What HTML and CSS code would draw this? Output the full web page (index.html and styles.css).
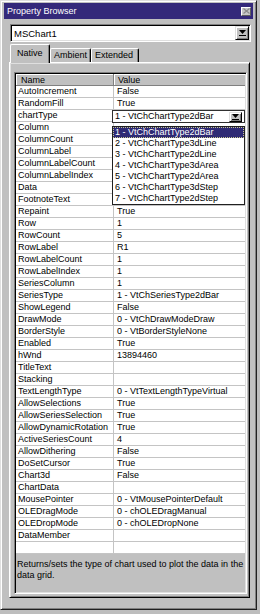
FILE: index.html
```html
<!DOCTYPE html>
<html>
<head>
<meta charset="utf-8">
<link rel="stylesheet" href="styles.css">
</head>
<body>
<div class="window">
  <div class="titlebar">
    <span class="title">Property Browser</span>
    <span class="close"><svg width="7" height="6" viewBox="0 0 7 6"><path d="M0.5 0.5L6.5 5.5M6.5 0.5L0.5 5.5" stroke="#8a8a8a" stroke-width="1.2" fill="none"/></svg></span>
  </div>
  <div class="combo">
    <span class="combo-text">MSChart1</span>
    <span class="dd-btn"><svg width="7" height="6" viewBox="0 0 7 6"><polygon points="0,0 7,0 3.5,4" fill="#000"/><rect x="0" y="5" width="7" height="1" fill="#000"/></svg></span>
  </div>
  <div class="tabs">
    <div class="tab active">Native</div>
    <div class="tab">Ambient</div>
    <div class="tab">Extended</div>
  </div>
  <div class="panel">
    <div class="grid">
      <div class="row header"><div class="name">Name</div><div class="value">Value</div></div>
      <div class="row"><div class="name">AutoIncrement</div><div class="value">False</div></div>
      <div class="row"><div class="name">RandomFill</div><div class="value">True</div></div>
      <div class="row"><div class="name">chartType</div><div class="value editing">
        <div class="editor"><span class="editor-text">1 - VtChChartType2dBar</span><span class="ed-btn"><svg width="7" height="6" viewBox="0 0 7 6"><polygon points="0,0 7,0 3.5,4" fill="#000"/><rect x="0" y="5" width="7" height="1" fill="#000"/></svg></span></div>
        <div class="list">
          <div class="item selected">1 - VtChChartType2dBar</div>
          <div class="item">2 - VtChChartType3dLine</div>
          <div class="item">3 - VtChChartType2dLine</div>
          <div class="item">4 - VtChChartType3dArea</div>
          <div class="item">5 - VtChChartType2dArea</div>
          <div class="item">6 - VtChChartType3dStep</div>
          <div class="item">7 - VtChChartType2dStep</div>
        </div>
      </div></div>
      <div class="row"><div class="name">Column</div><div class="value"></div></div>
      <div class="row"><div class="name">ColumnCount</div><div class="value"></div></div>
      <div class="row"><div class="name">ColumnLabel</div><div class="value"></div></div>
      <div class="row"><div class="name">ColumnLabelCount</div><div class="value"></div></div>
      <div class="row"><div class="name">ColumnLabelIndex</div><div class="value"></div></div>
      <div class="row"><div class="name">Data</div><div class="value"></div></div>
      <div class="row"><div class="name">FootnoteText</div><div class="value"></div></div>
      <div class="row"><div class="name">Repaint</div><div class="value">True</div></div>
      <div class="row"><div class="name">Row</div><div class="value">1</div></div>
      <div class="row"><div class="name">RowCount</div><div class="value">5</div></div>
      <div class="row"><div class="name">RowLabel</div><div class="value">R1</div></div>
      <div class="row"><div class="name">RowLabelCount</div><div class="value">1</div></div>
      <div class="row"><div class="name">RowLabelIndex</div><div class="value">1</div></div>
      <div class="row"><div class="name">SeriesColumn</div><div class="value">1</div></div>
      <div class="row"><div class="name">SeriesType</div><div class="value">1 - VtChSeriesType2dBar</div></div>
      <div class="row"><div class="name">ShowLegend</div><div class="value">False</div></div>
      <div class="row"><div class="name">DrawMode</div><div class="value">0 - VtChDrawModeDraw</div></div>
      <div class="row"><div class="name">BorderStyle</div><div class="value">0 - VtBorderStyleNone</div></div>
      <div class="row"><div class="name">Enabled</div><div class="value">True</div></div>
      <div class="row"><div class="name">hWnd</div><div class="value">13894460</div></div>
      <div class="row"><div class="name">TitleText</div><div class="value"></div></div>
      <div class="row"><div class="name">Stacking</div><div class="value"></div></div>
      <div class="row"><div class="name">TextLengthType</div><div class="value">0 - VtTextLengthTypeVirtual</div></div>
      <div class="row"><div class="name">AllowSelections</div><div class="value">True</div></div>
      <div class="row"><div class="name">AllowSeriesSelection</div><div class="value">True</div></div>
      <div class="row"><div class="name">AllowDynamicRotation</div><div class="value">True</div></div>
      <div class="row"><div class="name">ActiveSeriesCount</div><div class="value">4</div></div>
      <div class="row"><div class="name">AllowDithering</div><div class="value">False</div></div>
      <div class="row"><div class="name">DoSetCursor</div><div class="value">True</div></div>
      <div class="row"><div class="name">Chart3d</div><div class="value">False</div></div>
      <div class="row"><div class="name">ChartData</div><div class="value"></div></div>
      <div class="row"><div class="name">MousePointer</div><div class="value">0 - VtMousePointerDefault</div></div>
      <div class="row"><div class="name">OLEDragMode</div><div class="value">0 - chOLEDragManual</div></div>
      <div class="row"><div class="name">OLEDropMode</div><div class="value">0 - chOLEDropNone</div></div>
      <div class="row"><div class="name">DataMember</div><div class="value"></div></div>
      <div class="row"><div class="name"></div><div class="value"></div></div>
      <div class="desc">Returns/sets the type of chart used to plot the data in the<br>data grid.</div>
    </div>
  </div>
</div>
</body>
</html>
```
FILE: styles.css
```css
html, body {
  margin: 0;
  padding: 0;
}
body {
  background: #bdbdbd;
  font-family: "Liberation Sans", Arial, sans-serif;
  font-size: 9px;
  color: #000;
  width: 260px;
  height: 614px;
  overflow: hidden;
}
.window {
  box-sizing: border-box;
  width: 257px;
  height: 610px;
  background: #c0c0c0;
  border-top: 1px solid #dfdfdf;
  border-left: 1px solid #dfdfdf;
  border-right: 1px solid #202020;
  border-bottom: 1px solid #202020;
  box-shadow: inset 1px 1px #fff, inset -1px -1px #808080;
  padding: 2px 3px 0 3px;
}
.titlebar {
  height: 16px;
  background: #34297a;
  color: #fff;
  display: flex;
  align-items: center;
  justify-content: space-between;
  padding: 0 2px 0 3px;
}
.title {
  line-height: 16px;
  white-space: nowrap;
}
.close {
  box-sizing: border-box;
  width: 10px;
  height: 9px;
  background: #c8c8c8;
  border: 1px solid;
  border-color: #fff #606060 #606060 #fff;
  display: flex;
  align-items: center;
  justify-content: center;
}
.combo {
  box-sizing: border-box;
  margin: 5px 0 0 6px;
  width: 241px;
  height: 18px;
  background: #fff;
  border: 1px solid;
  border-color: #808080 #fff #fff #808080;
  box-shadow: inset 1px 1px #000, inset -1px -1px #dfdfdf;
  display: flex;
  align-items: center;
  justify-content: space-between;
  padding: 1px;
}
.combo-text {
  padding-left: 2px;
  font-size: 9.5px;
}
.dd-btn, .ed-btn {
  box-sizing: border-box;
  background: #c0c0c0;
  border: 1px solid;
  border-color: #dfdfdf #000 #000 #dfdfdf;
  box-shadow: inset 1px 1px #fff, inset -1px -1px #808080;
  display: flex;
  align-items: center;
  justify-content: center;
}
.dd-btn {
  width: 14px;
  height: 14px;
}
.tabs {
  display: flex;
  align-items: flex-end;
  height: 18px;
  margin: 2px 0 0 6px;
  position: relative;
  z-index: 2;
}
.tab {
  box-sizing: border-box;
  height: 14px;
  padding: 0 4px 0 3px;
  border-top: 1px solid #fff;
  border-left: 1px solid #fff;
  border-right: 1px solid #000;
  border-radius: 2px 2px 0 0;
  box-shadow: inset -1px 0 #808080;
  line-height: 13px;
  background: #c0c0c0;
}
.tab.active {
  height: 19px;
  margin-bottom: -1px;
  padding: 0 5px 0 6px;
  line-height: 17px;
}
.tab:nth-child(2) { width: 41px; }
.tab:nth-child(3) { width: 48px; }
.tab.active { width: 40px; }
.panel {
  box-sizing: border-box;
  margin-left: 5px;
  width: 241px;
  height: 536px;
  border: 1px solid;
  border-color: #fff #000 #000 #fff;
  box-shadow: inset 1px 1px #dfdfdf, inset -1px -1px #808080;
  padding: 9px 0 0 4px;
}
.grid {
  box-sizing: border-box;
  width: 233px;
  height: 522px;
  border: 1px solid;
  border-color: #808080 #fff #fff #808080;
  box-shadow: inset 1px 1px #000, inset -1px -1px #dfdfdf;
  padding: 1px;
  display: flex;
  flex-direction: column;
}
.row {
  display: flex;
  height: 12px;
  flex: none;
  background: #fff;
}
.row .name, .row .value {
  box-sizing: border-box;
  border-bottom: 1px solid #c4c4c4;
  line-height: 11px;
  white-space: nowrap;
}
.row .name {
  width: 98px;
  padding-left: 2px;
  border-right: 1px solid #c4c4c4;
}
.row .value {
  flex: 1;
  padding-left: 3px;
}
.row.header {
  height: 12px;
  background: #c0c0c0;
}
.row.header .name, .row.header .value {
  border-bottom: 1px solid #808080;
  box-shadow: inset 1px 1px #fff;
  border-right: 1px solid #808080;
  line-height: 12px;
}
.row.header .name { padding-left: 5px; }
.row.header .value { padding-left: 4px; border-right: none; }
.value.editing {
  position: relative;
}
.editor {
  position: absolute;
  top: 0;
  left: -2px;
  right: 0;
  height: 13px;
  box-sizing: border-box;
  background: #fff;
  border: 1px solid #303030;
  display: flex;
  align-items: center;
  justify-content: space-between;
  padding: 0 2px 0 2px;
  z-index: 3;
}
.editor-text {
  line-height: 11px;
}
.ed-btn {
  width: 13px;
  height: 10px;
}
.list {
  position: absolute;
  top: 16px;
  left: -2px;
  right: 0;
  box-sizing: border-box;
  background: #fff;
  border: 1px solid #202020;
  z-index: 3;
}
.item {
  height: 11px;
  line-height: 11px;
  padding-left: 2px;
  white-space: nowrap;
}
.item.selected {
  background: #2e2a74;
  color: #fff;
  outline: 1px dotted #c8c890;
  outline-offset: -1px;
}
.desc {
  flex: 1;
  background: #c0c0c0;
  padding: 5px 0 0 1px;
  line-height: 11px;
  white-space: nowrap;
}
```
